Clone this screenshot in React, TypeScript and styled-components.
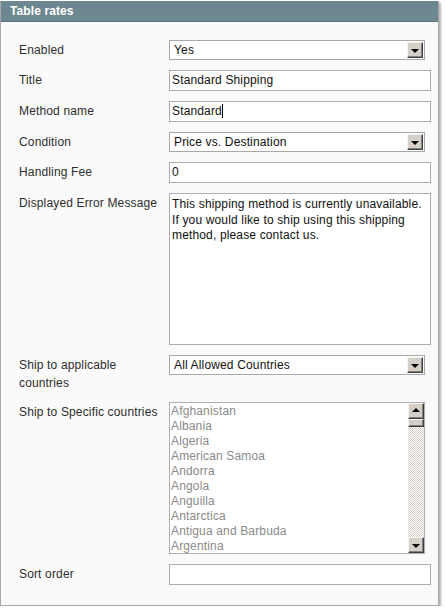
import React from "react";
import styled, { createGlobalStyle } from "styled-components";

const GlobalStyle = createGlobalStyle`
  html, body { margin: 0; padding: 0; background: #ffffff; }
  body { font-family: "Liberation Sans", Arial, sans-serif; font-size: 12px; color: #2f2f2f; letter-spacing: 0.15px; }
`;

const Panel = styled.div`
  box-sizing: border-box;
  width: 439px;
  margin-top: 1px;
  background: #fafafa;
  border: 1px solid #a9a9a9;
  border-top: none;
  box-shadow: 2px 2px 2px rgba(0, 0, 0, 0.3);
`;

const Header = styled.div`
  height: 21px;
  line-height: 21px;
  background: #6d8790;
  color: #ffffff;
  font-weight: bold;
  font-size: 12px;
  letter-spacing: 0.1px;
  padding-left: 9px;
  border-bottom: 1px solid #62787f;
  box-sizing: border-box;
`;

const Form = styled.div`
  display: grid;
  grid-template-columns: 150px 1fr;
  row-gap: 10px;
  padding: 18px 7px 20px 18px;
`;

const Label = styled.div`
  font-size: 12px;
  line-height: 18px;
  color: #2e2e2e;
  padding-top: 1px;
  padding-right: 4px;
`;

const TextBox = styled.div<{ $tall?: number }>`
  box-sizing: border-box;
  height: ${(p) => p.$tall ?? 21}px;
  border: 1px solid #adadad;
  background: #ffffff;
  padding: 0 2px;
  font-size: 12px;
  line-height: 19px;
  color: #111;
  white-space: nowrap;
`;

const Caret = styled.span`
  display: inline-block;
  width: 1px;
  height: 14px;
  background: #000;
  vertical-align: -3px;
`;

const TextArea = styled.div`
  box-sizing: border-box;
  height: 152px;
  border: 1px solid #adadad;
  background: #ffffff;
  padding: 3px 2px 2px 2px;
  font-size: 12px;
  line-height: 15.5px;
  color: #111;
`;

const SelectBox = styled.div`
  box-sizing: border-box;
  width: 256px;
  height: 20px;
  display: flex;
  align-items: center;
  justify-content: space-between;
  border: 1px solid #a8a8a8;
  background: #ffffff;
  padding: 0 1px 0 4px;
  font-size: 12px;
  color: #111;
`;

const WinButton = styled.div`
  box-sizing: border-box;
  width: 16px;
  height: 16px;
  background: #d4d0c8;
  border-top: 1px solid #f4f3ef;
  border-left: 1px solid #f4f3ef;
  border-right: 1px solid #404040;
  border-bottom: 1px solid #404040;
  box-shadow: inset -1px -1px 0 #808080;
  display: flex;
  align-items: center;
  justify-content: center;
  flex: none;
`;

const Arrow = styled.div<{ $up?: boolean }>`
  width: 0;
  height: 0;
  border-left: 4px solid transparent;
  border-right: 4px solid transparent;
  ${(p) =>
    p.$up
      ? "border-bottom: 4px solid #000; margin-top: -2px;"
      : "border-top: 4px solid #000; margin-top: 1px;"}
`;

const ListBox = styled.div`
  box-sizing: border-box;
  width: 256px;
  height: 152px;
  border: 1px solid #adadad;
  background: #ffffff;
  display: flex;
  overflow: hidden;
`;

const ListItems = styled.div`
  flex: 1;
  padding: 1px 0 0 1px;
`;

const ListItem = styled.div`
  font-size: 12px;
  line-height: 15px;
  color: #8a8a8a;
  white-space: nowrap;
`;

const ScrollBar = styled.div`
  width: 16px;
  display: flex;
  flex-direction: column;
  flex: none;
`;

const Thumb = styled.div`
  box-sizing: border-box;
  height: 8px;
  background: #d4d0c8;
  border-top: 1px solid #f4f3ef;
  border-left: 1px solid #f4f3ef;
  border-right: 1px solid #404040;
  border-bottom: 1px solid #404040;
  box-shadow: inset -1px -1px 0 #808080;
`;

const Track = styled.div`
  flex: 1;
  background-color: #ffffff;
  background-image: repeating-conic-gradient(#d4d0c8 0 25%, #ffffff 0 50%);
  background-size: 2px 2px;
`;

const Select = ({ value }: { value: string }) => (
  <SelectBox>
    <span>{value}</span>
    <WinButton>
      <Arrow />
    </WinButton>
  </SelectBox>
);

const countries = [
  "Afghanistan",
  "Albania",
  "Algeria",
  "American Samoa",
  "Andorra",
  "Angola",
  "Anguilla",
  "Antarctica",
  "Antigua and Barbuda",
  "Argentina",
];

export default function App() {
  return (
    <>
      <GlobalStyle />
      <Panel>
        <Header>Table rates</Header>
        <Form>
          <Label>Enabled</Label>
          <Select value="Yes" />

          <Label>Title</Label>
          <TextBox>Standard Shipping</TextBox>

          <Label>Method name</Label>
          <TextBox>
            Standard
            <Caret />
          </TextBox>

          <Label>Condition</Label>
          <Select value="Price vs. Destination" />

          <Label>Handling Fee</Label>
          <TextBox>0</TextBox>

          <Label>Displayed Error Message</Label>
          <TextArea>
            This shipping method is currently unavailable.
            <br />
            If you would like to ship using this shipping
            <br />
            method, please contact us.
          </TextArea>

          <Label>
            Ship to applicable
            <br />
            countries
          </Label>
          <Select value="All Allowed Countries" />

          <Label>Ship to Specific countries</Label>
          <ListBox>
            <ListItems>
              {countries.map((c) => (
                <ListItem key={c}>{c}</ListItem>
              ))}
            </ListItems>
            <ScrollBar>
              <WinButton>
                <Arrow $up />
              </WinButton>
              <Thumb />
              <Track />
              <WinButton>
                <Arrow />
              </WinButton>
            </ScrollBar>
          </ListBox>

          <Label>Sort order</Label>
          <TextBox />
        </Form>
      </Panel>
    </>
  );
}
